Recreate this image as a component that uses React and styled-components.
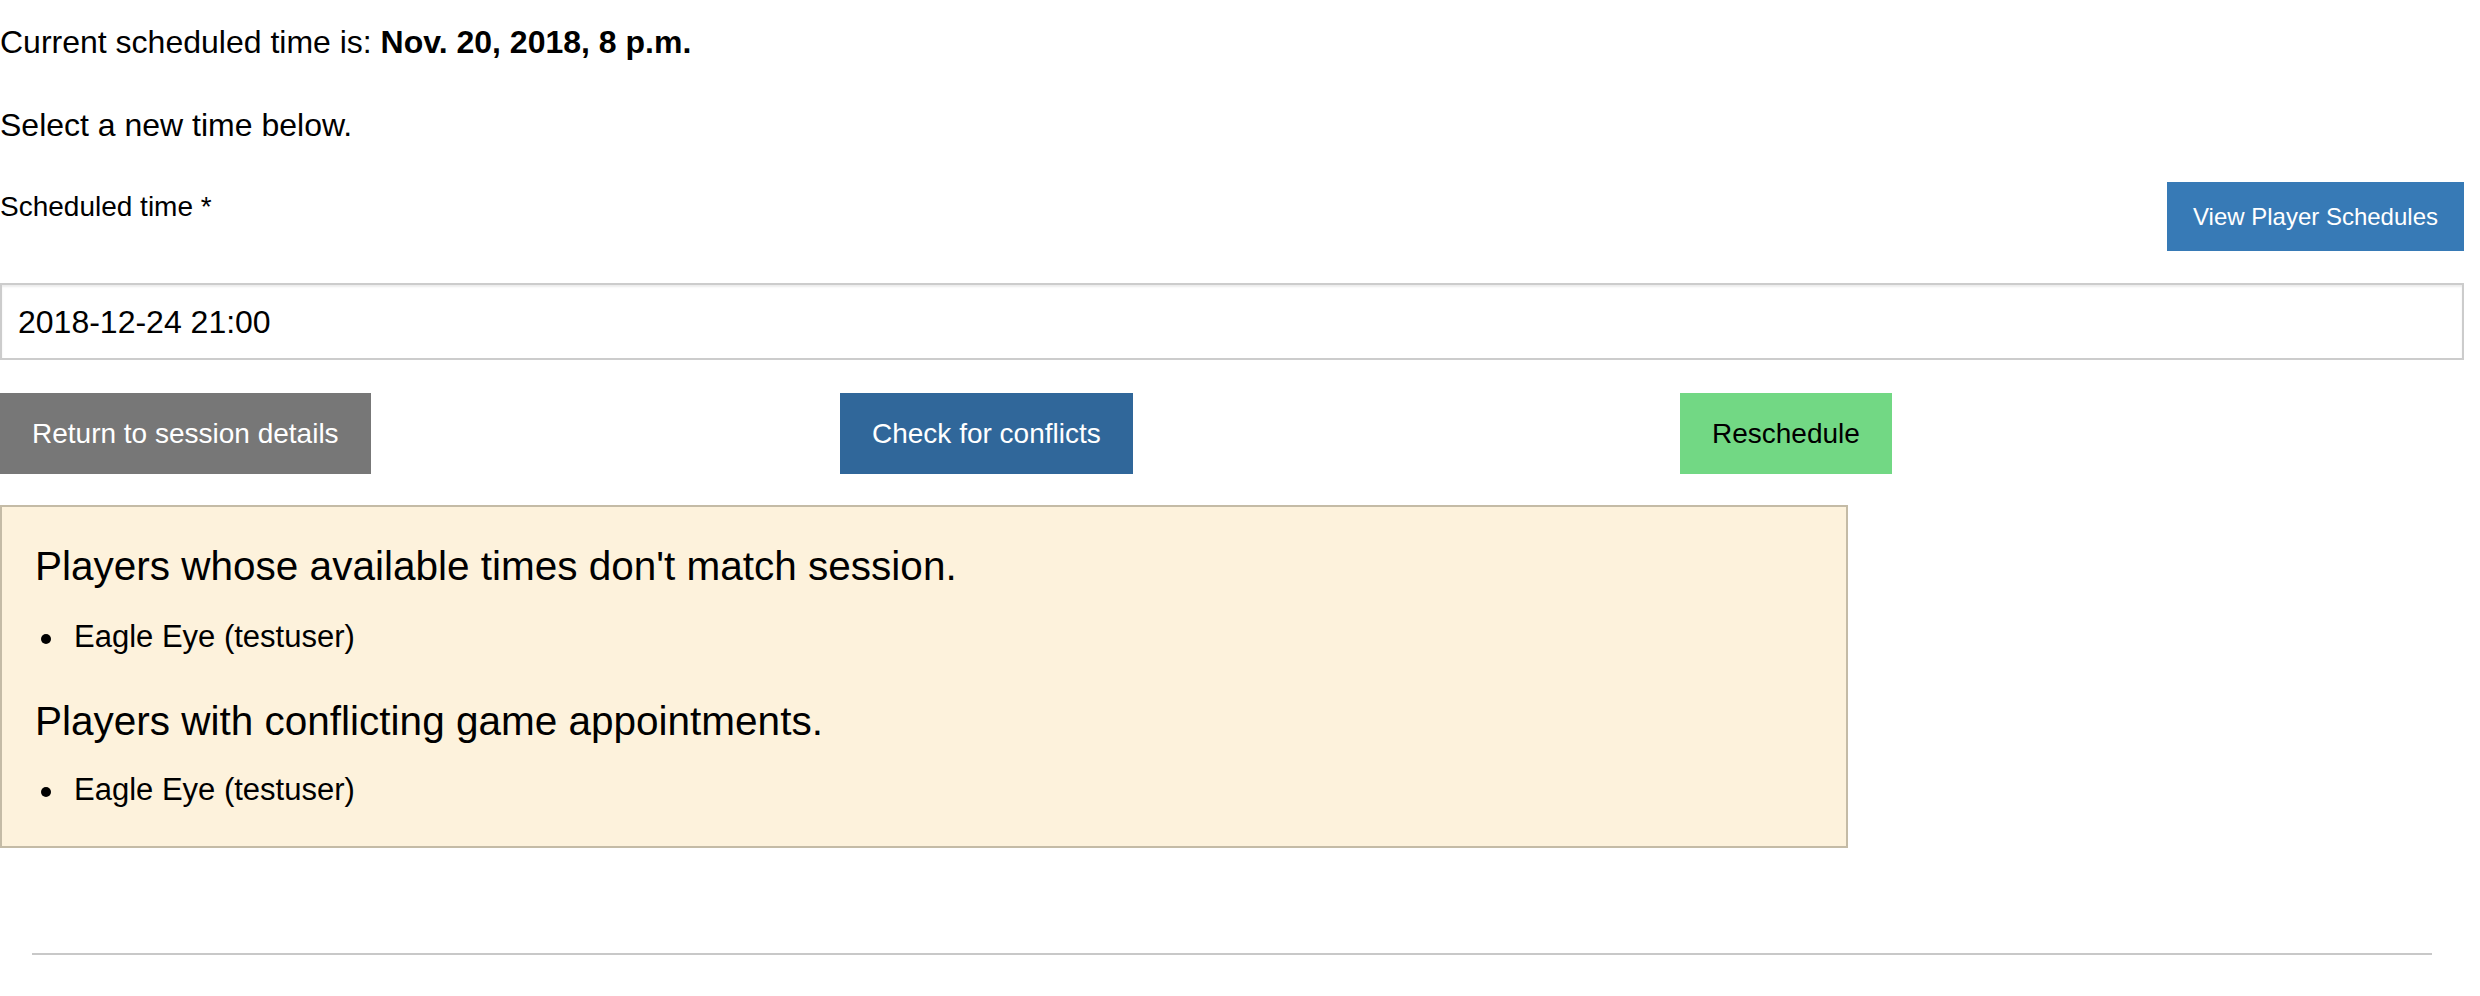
import React from 'react';
import styled, { createGlobalStyle } from 'styled-components';

const GlobalStyle = createGlobalStyle`
    html, body {
        margin: 0;
        padding: 0;
        background: #ffffff;
    }
    body {
        font-family: "Liberation Sans", Arial, Helvetica, sans-serif;
        font-size: 32px;
        color: #000000;
    }
`;

const Page = styled.div`
    width: 2464px;
    padding-top: 17px;
`;

const Paragraph = styled.p`
    margin: 0 0 ${props => props.gap || 32}px;
    line-height: 51px;
    font-size: 32px;
`;

const FieldHeader = styled.div`
    display: flex;
    justify-content: space-between;
    align-items: flex-start;
    margin-bottom: 32px;
`;

const Label = styled.label`
    font-size: 28px;
    line-height: 40px;
    padding-top: 5px;
`;

const Button = styled.button`
    display: inline-flex;
    align-items: center;
    justify-content: center;
    height: ${props => (props.small ? 69 : 81)}px;
    padding: 0 ${props => (props.small ? 26 : 32)}px;
    border: none;
    border-radius: 0;
    background: ${props => props.bg};
    color: ${props => props.fg || '#ffffff'};
    font-family: "Liberation Sans", Arial, Helvetica, sans-serif;
    font-size: ${props => (props.small ? 24 : 28)}px;
    cursor: pointer;
`;

const TimeInput = styled.input`
    display: block;
    box-sizing: border-box;
    width: 100%;
    height: 77px;
    margin: 0 0 33px;
    padding: 2px 16px 0;
    border: 2px solid #cccccc;
    border-radius: 0;
    box-shadow: inset 0 2px 2px rgba(0, 0, 0, 0.075);
    font-family: "Liberation Sans", Arial, Helvetica, sans-serif;
    font-size: 32px;
    color: #000000;
    outline: none;
`;

const ActionRow = styled.div`
    display: grid;
    grid-template-columns: repeat(3, 840px);
    justify-items: start;
    margin-bottom: 31px;
`;

const Alert = styled.div`
    box-sizing: border-box;
    width: 75%;
    padding: 37px 33px 0;
    background: #fdf2dc;
    border: 2px solid #c4bba6;
`;

const AlertHeading = styled.h4`
    margin: 0 0 ${props => props.gap}px;
    font-size: 40.5px;
    font-weight: normal;
    line-height: 44px;
`;

const PlayerList = styled.ul`
    margin: 0 0 ${props => props.gap}px;
    padding-left: 39px;
    list-style: none;
    font-size: 31px;
    line-height: 46px;

    li::before {
        content: '';
        display: inline-block;
        width: 10px;
        height: 10px;
        margin: 0 23px 0 -33px;
        border-radius: 50%;
        background: #000000;
        vertical-align: middle;
    }
`;

const Divider = styled.hr`
    margin: 105px 32px 0;
    border: none;
    border-top: 2px solid #c8c8c8;
    height: 0;
`;

const conflicts = [
    {
        title: "Players whose available times don't match session.",
        players: ['Eagle Eye (testuser)'],
        headingGap: 26,
        listGap: 39,
    },
    {
        title: 'Players with conflicting game appointments.',
        players: ['Eagle Eye (testuser)'],
        headingGap: 24,
        listGap: 33,
    },
];

export default function App() {
    return (
        <>
            <GlobalStyle />
            <Page>
                <Paragraph>
                    Current scheduled time is: <strong>Nov. 20, 2018, 8 p.m.</strong>
                </Paragraph>
                <Paragraph gap={31}>Select a new time below.</Paragraph>
                <FieldHeader>
                    <Label htmlFor="scheduled-time">Scheduled time *</Label>
                    <Button small bg="#377ab6">View Player Schedules</Button>
                </FieldHeader>
                <TimeInput id="scheduled-time" type="text" defaultValue="2018-12-24 21:00" />
                <ActionRow>
                    <Button bg="#777777">Return to session details</Button>
                    <Button bg="#30679a">Check for conflicts</Button>
                    <Button bg="#72d884" fg="#000000">Reschedule</Button>
                </ActionRow>
                <Alert>
                    {conflicts.map(group => (
                        <React.Fragment key={group.title}>
                            <AlertHeading gap={group.headingGap}>{group.title}</AlertHeading>
                            <PlayerList gap={group.listGap}>
                                {group.players.map(player => (
                                    <li key={player}>{player}</li>
                                ))}
                            </PlayerList>
                        </React.Fragment>
                    ))}
                </Alert>
                <Divider />
            </Page>
        </>
    );
}
